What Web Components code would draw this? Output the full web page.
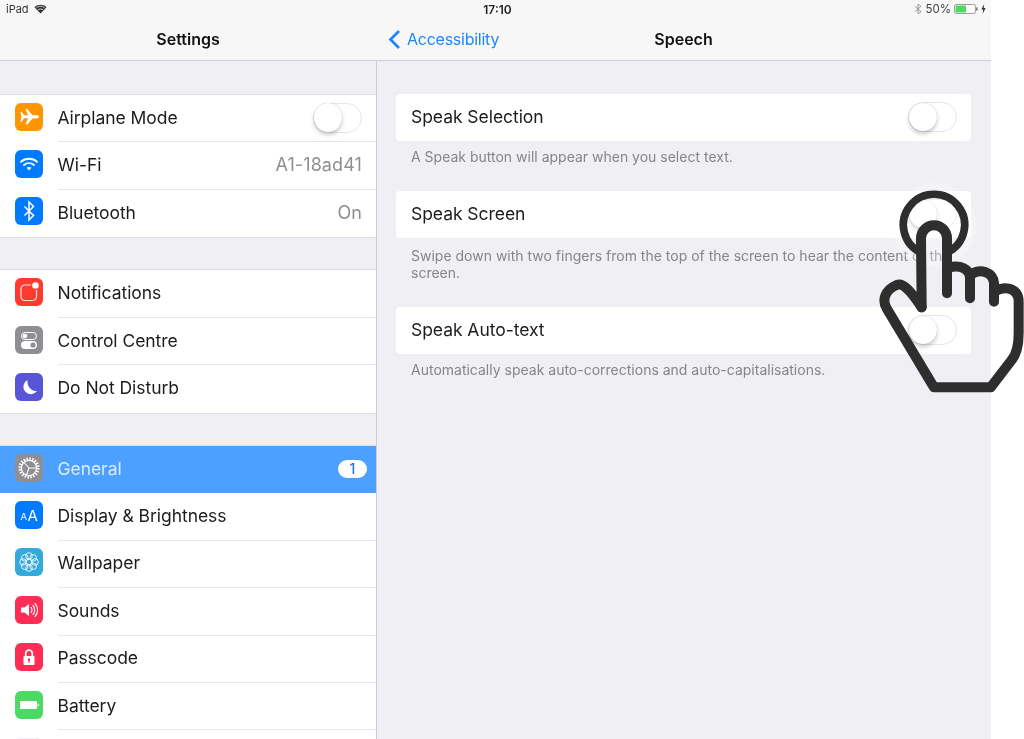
<!DOCTYPE html>
<html lang="en">
<head>
<meta charset="utf-8">
<title>Speech</title>
<style>
  html, body { margin: 0; background: #fff; }
  body { width: 1024px; height: 739px; overflow: hidden; font-family: Inter, "Noto Sans", sans-serif; color: #1c1c1e; }
</style>
</head>
<body>
<ipad-screen>
  <ios-status slot="status"></ios-status>
  <nav-title slot="nav-left">Settings</nav-title>
  <nav-title slot="nav-right" back="Accessibility">Speech</nav-title>

  <settings-group slot="sidebar">
    <settings-row icon="airplane">Airplane Mode<ios-toggle slot="end"></ios-toggle></settings-row>
    <settings-row icon="wifi">Wi-Fi<row-value slot="end">A1-18ad41</row-value></settings-row>
    <settings-row icon="bluetooth" last>Bluetooth<row-value slot="end">On</row-value></settings-row>
  </settings-group>
  <settings-group slot="sidebar">
    <settings-row icon="notifications">Notifications</settings-row>
    <settings-row icon="control">Control Centre</settings-row>
    <settings-row icon="moon" last>Do Not Disturb</settings-row>
  </settings-group>
  <settings-group slot="sidebar">
    <settings-row icon="gear" selected last>General<row-badge slot="end">1</row-badge></settings-row>
    <settings-row icon="display">Display &amp; Brightness</settings-row>
    <settings-row icon="wallpaper">Wallpaper</settings-row>
    <settings-row icon="sounds">Sounds</settings-row>
    <settings-row icon="passcode">Passcode</settings-row>
    <settings-row icon="battery">Battery</settings-row>
    <settings-row icon="blank" last></settings-row>
  </settings-group>

  <speech-option slot="detail" label="Speak Selection">A Speak button will appear when you select text.</speech-option>
  <speech-option slot="detail" label="Speak Screen" tall>Swipe down with two fingers from the top of the screen to hear the content of the screen.</speech-option>
  <speech-option slot="detail" label="Speak Auto-text">Automatically speak auto-corrections and auto-capitalisations.</speech-option>

  <tap-hand slot="overlay"></tap-hand>
</ipad-screen>

<script>
// icon glyphs, all on a 28x28 box
const ICONS = {
  airplane: ['#ff9500', `<path fill="#fff" d="M5.5 9l1.2-.3 2.4 3.5h4L10.5 6.3l1.7-.3 5.3 6.200h4c1.500 0 2.500.7 2.500 1.600s-1 1.600-2.500 1.600h-4L12.200 21.600l-1.700-.3 2.600-6.100h-4L6.700 18.700l-1.200-.3.900-4.600z"/>`],
  wifi: ['#007aff', `<g fill="none" stroke="#fff" stroke-width="1.900" stroke-linecap="round"><path d="M6 11.800c4.600-4 11.400-4 16 0"/><path d="M9 15c2.900-2.500 7.100-2.500 10 0"/></g><path fill="#fff" d="M11.500 17.800c1.500-1.200 3.500-1.200 5 0L14 20.500z"/>`],
  bluetooth: ['#007aff', `<path fill="none" stroke="#fff" stroke-width="1.500" d="M9.500 9.500l9 9L14 23V5l4.500 4.500-9 9"/>`],
  notifications: ['#ff3b30', `<rect x="6" y="7" width="15.500" height="15.500" rx="4" fill="none" stroke="#fff" stroke-opacity=".85" stroke-width="1.200"/><circle cx="20.500" cy="7.500" r="4.600" fill="#ff3b30"/><circle cx="20.500" cy="7.500" r="3.300" fill="#fff"/>`],
  control: ['#8e8e93', `<rect x="6.500" y="6.500" width="15" height="7" rx="3.500" fill="none" stroke="#fff" stroke-width="1"/><circle cx="10" cy="10" r="2.300" fill="#fff"/><rect x="6" y="15" width="16" height="8" rx="4" fill="#fff"/><circle cx="18" cy="19" r="2.600" fill="#8e8e93"/>`],
  moon: ['#5856d6', `<path fill="#fff" d="M12.500 7a7.500 7.500 0 1 0 9.500 11c-5.200 1-10.500-5-9.500-11z"/>`],
  gear: ['#8e8e93', `<circle cx="14" cy="14" r="9.300" fill="none" stroke="#fff" stroke-width="2.600" stroke-dasharray="1.500 1.420"/><circle cx="14" cy="14" r="7.600" fill="none" stroke="#fff" stroke-width="1.300"/><g stroke="#fff" stroke-width="1.100"><path d="M14 14L9 8.500M14 14h7.500M14 14l-2.500 7"/></g>`],
  display: ['#007aff', `<text x="5.500" y="18.700" font-size="9.500" font-family="Inter" fill="#fff">A</text><text x="12.600" y="19.700" font-size="15" font-family="Inter" fill="#fff">A</text>`],
  wallpaper: ['#34aadc', `<g fill="none" stroke="#fff" stroke-width=".85"><circle cx="14" cy="14" r="3"/><circle cx="14" cy="8" r="3.300"/><circle cx="14" cy="20" r="3.300"/><circle cx="8" cy="14" r="3.300"/><circle cx="20" cy="14" r="3.300"/><circle cx="9.800" cy="9.800" r="3.300"/><circle cx="18.200" cy="9.800" r="3.300"/><circle cx="9.800" cy="18.200" r="3.300"/><circle cx="18.200" cy="18.200" r="3.300"/></g>`],
  sounds: ['#ff2d55', `<path fill="#fff" d="M6 11.500h3.500L14 8v12l-4.500-3.500H6z"/><g fill="none" stroke="#fff" stroke-width="1.100" stroke-linecap="round"><path d="M16 11.500a3.500 3.500 0 0 1 0 5"/><path d="M18 9.500a6.500 6.500 0 0 1 0 9"/><path d="M20 7.500a9.500 9.500 0 0 1 0 13"/></g>`],
  passcode: ['#ff2d55', `<path fill="none" stroke="#fff" stroke-width="1.700" d="M10.700 13V10.500a3.300 3.300 0 0 1 6.600 0V13"/><rect x="8.500" y="13" width="11" height="9" rx="1" fill="#fff"/><circle cx="14" cy="16.700" r="1.200" fill="#ff2d55"/><rect x="13.500" y="17" width="1" height="3" fill="#ff2d55"/>`],
  battery: ['#4cd964', `<rect x="5" y="10" width="17" height="8" rx="1" fill="#fff"/><rect x="22.600" y="12.700" width="1.200" height="2.600" fill="#fff"/>`],
  blank: ['#efeff4', '']
};

class IpadScreen extends HTMLElement {
  constructor() {
    super();
    this.attachShadow({ mode: 'open' }).innerHTML = `
      <style>
        :host { display: block; position: relative; width: 1024px; height: 739px; filter: blur(.45px); }
        #device { width: 991px; height: 739px; display: flex; flex-direction: column; background: #efeff4; overflow: hidden; }
        header { flex: none; height: 60px; background: #f7f7f8; border-bottom: 1px solid #cfcfd3; }
        #nav { display: flex; height: 42px; }
        #nav .left { flex: none; width: 376px; }
        #nav .right { flex: 1; }
        main { flex: 1; display: flex; min-height: 0; }
        #sidebar { flex: none; width: 376px; border-right: 1px solid #cdcdd1; padding-top: 34px; overflow: hidden; }
        #detail { flex: 1; padding: 33px 20px 0 19px; display: flex; flex-direction: column; }
      </style>
      <div id="device">
        <header>
          <slot name="status"></slot>
          <div id="nav">
            <div class="left"><slot name="nav-left"></slot></div>
            <div class="right"><slot name="nav-right"></slot></div>
          </div>
        </header>
        <main>
          <div id="sidebar"><slot name="sidebar"></slot></div>
          <div id="detail"><slot name="detail"></slot></div>
        </main>
      </div>
      <slot name="overlay"></slot>`;
  }
}

class IosStatus extends HTMLElement {
  constructor() {
    super();
    this.attachShadow({ mode: 'open' }).innerHTML = `
      <style>
        :host { display: grid; grid-template-columns: 1fr auto 1fr; align-items: center; height: 18px; padding: 0 5px 0 6px; font-size: 11px; color: #333; }
        .left, .right { display: flex; align-items: center; }
        .left { gap: 5px; }
        .right { justify-content: flex-end; gap: 3px; color: #444; font-size: 11.5px; }
        .time { font-weight: 600; font-size: 12px; color: #222; padding-left: 3px; }
      </style>
      <div class="left">
        <span>iPad</span>
        <svg width="13" height="10" viewBox="0 0 13 10"><path d="M6.500 9.500L.5 3.200c3.400-3.200 8.600-3.200 12 0z" fill="#333"/><path d="M2.300 3.800c2.500-2 5.900-2 8.400 0" fill="none" stroke="#f7f7f8" stroke-width=".8"/><path d="M4 5.800c1.500-1.100 3.500-1.100 5 0" fill="none" stroke="#f7f7f8" stroke-width=".8"/></svg>
      </div>
      <span class="time">17:10</span>
      <div class="right">
        <svg width="8" height="12" viewBox="0 0 8 12"><path d="M1 3.300l6 5.400L4 11V1l3 2.300-6 5.400" fill="none" stroke="#999" stroke-width="1"/></svg>
        <span>50%</span>
        <svg width="24" height="10" viewBox="0 0 24 10"><rect x=".5" y=".5" width="21" height="9" rx="1.800" fill="#fff" stroke="#888" stroke-width=".8"/><rect x="1.500" y="1.500" width="10.500" height="7" fill="#4cd964"/><rect x="22.300" y="3.400" width="1.200" height="3.200" fill="#555"/></svg>
        <svg width="5" height="10" viewBox="0 0 5 10"><path d="M3.200 0L.3 5.600h1.900L1.600 10l3-5.900H2.700z" fill="#333"/></svg>
      </div>`;
  }
}

class NavTitle extends HTMLElement {
  constructor() {
    super();
    const back = this.getAttribute('back');
    this.attachShadow({ mode: 'open' }).innerHTML = `
      <style>
        :host { display: grid; grid-template-columns: 1fr auto 1fr; align-items: center; height: 42px; }
        .title { font-size: 16px; font-weight: 600; color: #111; grid-column: 2; }
        .back { display: flex; align-items: center; gap: 6px; padding-left: 12px; color: #1e86fb; font-size: 16px; letter-spacing: -.25px; }
      </style>
      <div class="back">${back ? `<svg width="13" height="21" viewBox="0 0 13 21"><path d="M11 2L2.500 10.500 11 19" fill="none" stroke="currentColor" stroke-width="2.800"/></svg><span>${back}</span>` : ''}</div>
      <div class="title"><slot></slot></div>`;
  }
}

class SettingsGroup extends HTMLElement {
  constructor() {
    super();
    this.attachShadow({ mode: 'open' }).innerHTML = `
      <style>
        :host { display: block; background: #fff; box-shadow: 0 -1px 0 #dfdfe3, 0 1px 0 #dfdfe3; margin-bottom: 33.3px; }
      </style>
      <slot></slot>`;
  }
}

class SettingsRow extends HTMLElement {
  constructor() {
    super();
    const [bg, glyph] = ICONS[this.getAttribute('icon')] || ['#ccc', ''];
    this.attachShadow({ mode: 'open' }).innerHTML = `
      <style>
        :host { display: flex; align-items: center; height: 47.4px; box-sizing: border-box; padding-left: 14.5px; font-size: 17.5px; letter-spacing: -.05px; color: #1c1c1e; }
        :host([selected]) { background: #4ca0ff; color: #d9ebff; }
        .line { flex: 1; align-self: stretch; display: flex; align-items: center; margin-left: 15px; padding-right: 14px; border-bottom: 1px solid #e6e6ea; }
        :host([last]) .line { border-bottom: 0; }
        svg { flex: none; display: block; border-radius: 6px; margin-bottom: 4px; }
        .label { flex: 1; margin-top: -2px; }
      </style>
      <svg width="28" height="28" viewBox="0 0 28 28" style="background:${bg}">${glyph}</svg>
      <div class="line">
        <div class="label"><slot></slot></div>
        <slot name="end"></slot>
      </div>`;
  }
}

class RowValue extends HTMLElement {
  constructor() {
    super();
    this.attachShadow({ mode: 'open' }).innerHTML = `
      <style>:host { display: block; color: #8e8e93; font-size: 18px; letter-spacing: .1px; margin-top: -2px; }</style><slot></slot>`;
  }
}

class RowBadge extends HTMLElement {
  constructor() {
    super();
    this.attachShadow({ mode: 'open' }).innerHTML = `
      <style>
        :host { display: block; background: #fff; color: #2a6fe0; width: 29px; height: 18px; line-height: 18px; border-radius: 9px; text-align: center; font-size: 14px; font-weight: 500; margin: -2px -5px 0 0; }
      </style><slot></slot>`;
  }
}

class IosToggle extends HTMLElement {
  constructor() {
    super();
    this.attachShadow({ mode: 'open' }).innerHTML = `
      <style>
        :host { display: block; flex: none; width: 49px; height: 30px; box-sizing: border-box; border: 1px solid #e5e5ea; border-radius: 15px; background: #fff; position: relative; margin-top: -1px; }
        i { position: absolute; left: -.5px; top: -.5px; width: 28.5px; height: 28.5px; border-radius: 50%; background: #fff; box-shadow: 0 3px 4px rgba(0,0,0,.2), 0 0 1px rgba(0,0,0,.25); }
      </style>
      <i></i>`;
  }
}

class SpeechOption extends HTMLElement {
  constructor() {
    super();
    this.attachShadow({ mode: 'open' }).innerHTML = `
      <style>
        :host { display: block; }
        .card { height: 47px; background: #fff; border-radius: 4px; display: flex; align-items: center; justify-content: space-between; padding: 0 14px 0 15px; font-size: 17.5px; letter-spacing: -.05px; color: #1c1c1e; }
        .card span { margin-top: -2px; }
        .foot { padding: 7px 16px 25.5px 15px; font-size: 14px; line-height: 17.5px; color: #85858b; }
        :host([tall]) .foot { padding-top: 8.5px; padding-bottom: 25.5px; }
      </style>
      <div class="card"><span>${this.getAttribute('label')}</span><ios-toggle></ios-toggle></div>
      <div class="foot"><slot></slot></div>`;
  }
}

class TapHand extends HTMLElement {
  constructor() {
    super();
    // drawn at 3x so the path numbers stay easy to tune
    this.attachShadow({ mode: 'open' }).innerHTML = `
      <style>
        :host { position: absolute; left: 860px; top: 170px; width: 164px; height: 230px; display: block; }
        svg { display: block; }
      </style>
      <svg width="164" height="230" viewBox="0 0 492 690" fill="none" stroke="#2e2e2e" stroke-linecap="round" stroke-linejoin="round">
        <circle cx="222" cy="165" r="127" fill="#fff" fill-opacity=".3" stroke="none"/>
        <path stroke-width="23" d="M183 248A92 92 0 1 1 261 248"/>
        <g stroke-width="30">
          <path d="M185 412L183 205A39 39 0 0 1 261 205L261 370"/>
          <path d="M268 292C300 285 330 295 330 325L330 385"/>
          <path d="M335 312C360 295 400 305 402 340L402 395"/>
          <path d="M405 365C420 350 476 345 476 395L476 490Q476 545 455 570L392 652L222 652L80 415C65 390 75 360 110 345C130 338 150 360 185 412"/>
        </g>
      </svg>`;
  }
}

customElements.define('ipad-screen', IpadScreen);
customElements.define('ios-status', IosStatus);
customElements.define('nav-title', NavTitle);
customElements.define('settings-group', SettingsGroup);
customElements.define('settings-row', SettingsRow);
customElements.define('row-value', RowValue);
customElements.define('row-badge', RowBadge);
customElements.define('ios-toggle', IosToggle);
customElements.define('speech-option', SpeechOption);
customElements.define('tap-hand', TapHand);
</script>
</body>
</html>
